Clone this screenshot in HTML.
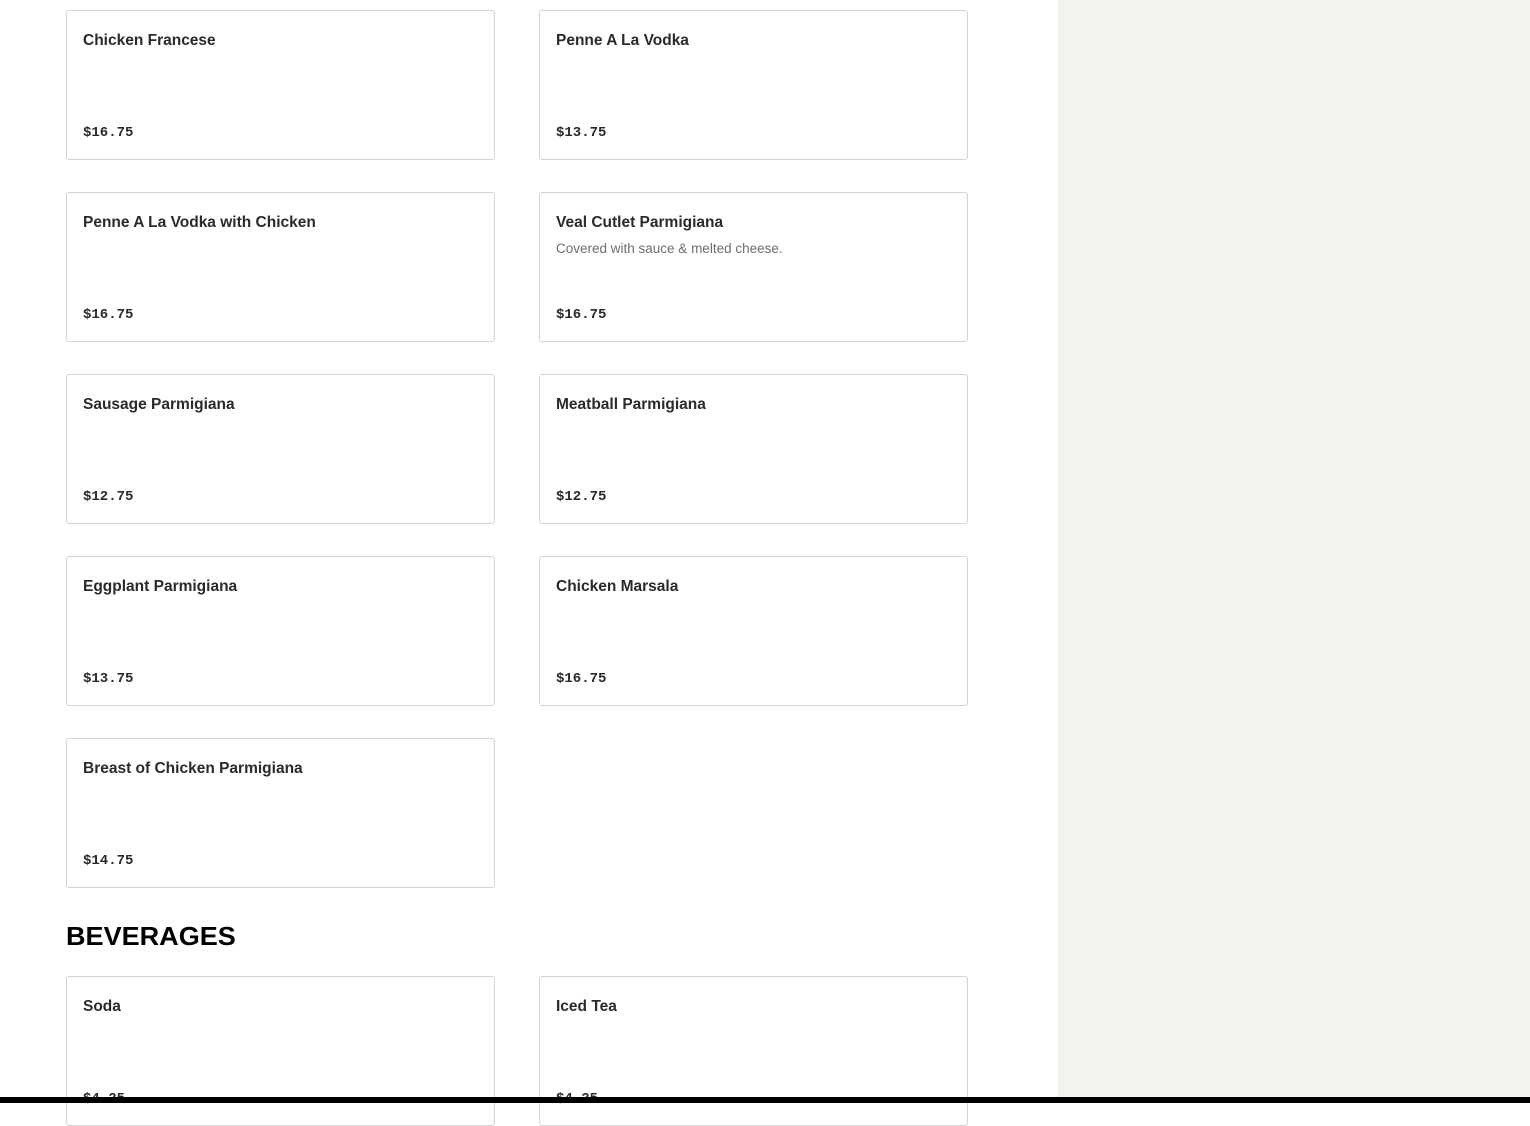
<!DOCTYPE html>
<html><head><meta charset="utf-8"><style>
*{margin:0;padding:0;box-sizing:border-box}
html,body{width:1530px;height:1103px;overflow:hidden;background:#fff;font-family:"Liberation Sans",sans-serif}
.side{position:absolute;left:1058px;top:0;width:472px;height:1103px;background:#f3f2ef}
.bar{position:absolute;left:0;top:1097px;width:1530px;height:6px;background:#000}
.card{position:absolute;width:429px;height:150px;border:1px solid #d4d4d4;border-radius:3px;background:#fff}
.t{position:absolute;left:16px;top:21px;font-size:15.5px;font-weight:bold;color:#2a2a2a;white-space:nowrap}
.d{position:absolute;left:16px;top:48px;font-size:13.5px;color:#6e6e6e}
.p{position:absolute;left:16px;top:114px;font-family:"Liberation Mono",monospace;font-size:14px;font-weight:bold;color:#2a2a2a}
h2{position:absolute;left:66px;top:921px;font-size:26px;font-weight:900;color:#000;white-space:nowrap;transform:scaleX(1.04);transform-origin:left}
</style></head><body>
<div class="side"></div>
<div class="card" style="left:66px;top:10px"><div class="t">Chicken Francese</div><div class="p">$16.75</div></div>
<div class="card" style="left:539px;top:10px"><div class="t">Penne A La Vodka</div><div class="p">$13.75</div></div>
<div class="card" style="left:66px;top:192px"><div class="t">Penne A La Vodka with Chicken</div><div class="p">$16.75</div></div>
<div class="card" style="left:539px;top:192px"><div class="t">Veal Cutlet Parmigiana</div><div class="d">Covered with sauce &amp; melted cheese.</div><div class="p">$16.75</div></div>
<div class="card" style="left:66px;top:374px"><div class="t">Sausage Parmigiana</div><div class="p">$12.75</div></div>
<div class="card" style="left:539px;top:374px"><div class="t">Meatball Parmigiana</div><div class="p">$12.75</div></div>
<div class="card" style="left:66px;top:556px"><div class="t">Eggplant Parmigiana</div><div class="p">$13.75</div></div>
<div class="card" style="left:539px;top:556px"><div class="t">Chicken Marsala</div><div class="p">$16.75</div></div>
<div class="card" style="left:66px;top:738px"><div class="t">Breast of Chicken Parmigiana</div><div class="p">$14.75</div></div>
<h2>BEVERAGES</h2>
<div class="card" style="left:66px;top:976px"><div class="t">Soda</div><div class="p">$4.25</div></div>
<div class="card" style="left:539px;top:976px"><div class="t">Iced Tea</div><div class="p">$4.25</div></div>
<div class="bar"></div>
</body></html>
